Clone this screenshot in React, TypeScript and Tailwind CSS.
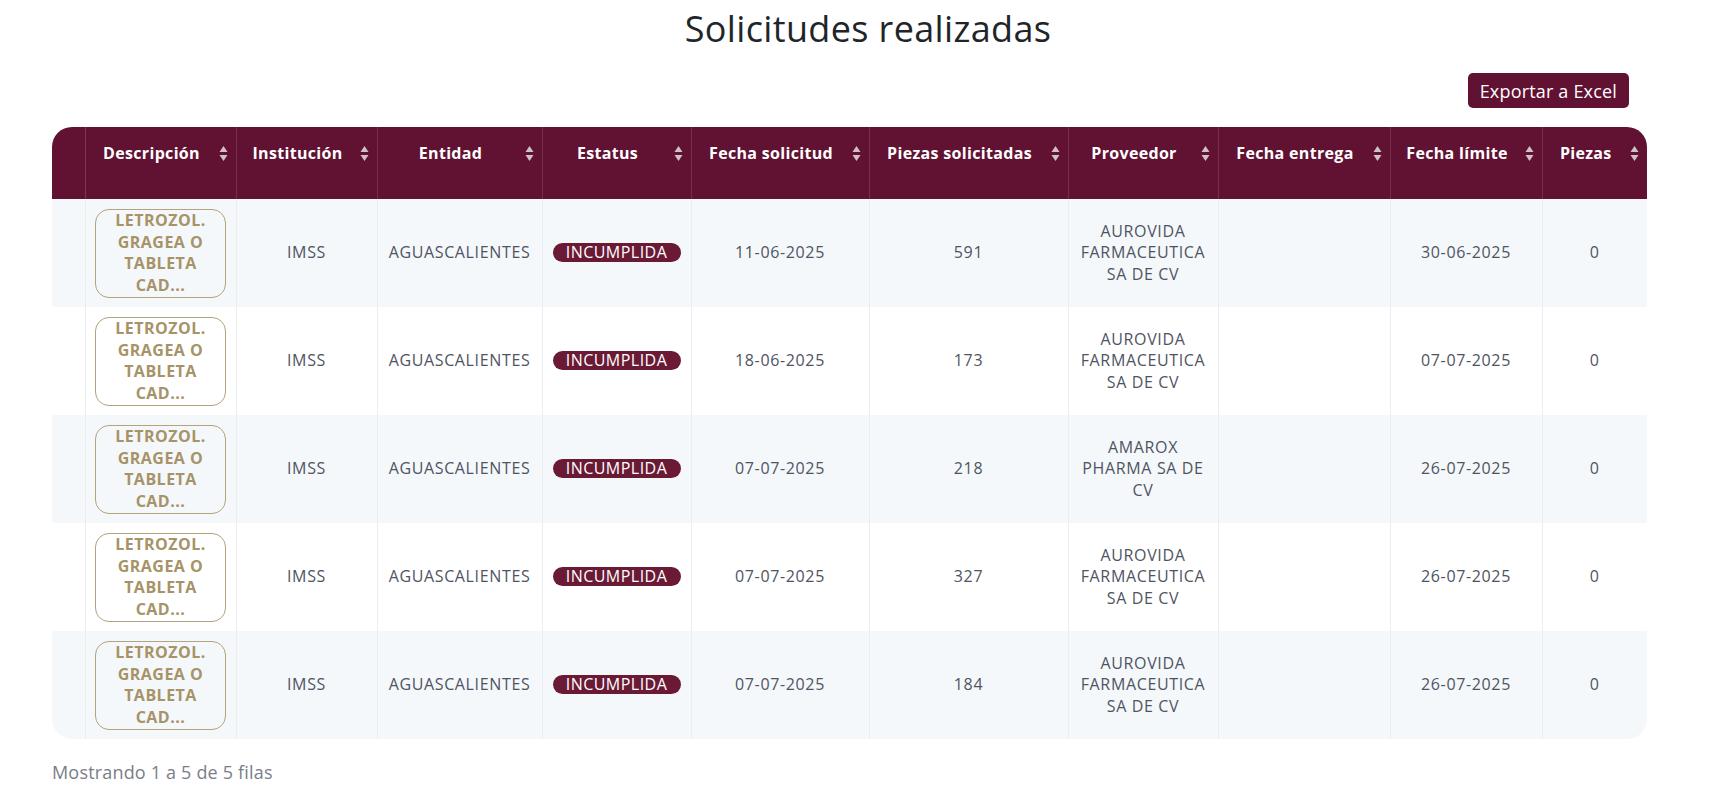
import React from "react";

type Row = {
  fecha: string;
  piezas: string;
  proveedor: string[];
  limite: string;
};

const rows: Row[] = [
  { fecha: "11-06-2025", piezas: "591", proveedor: ["AUROVIDA", "FARMACEUTICA", "SA DE CV"], limite: "30-06-2025" },
  { fecha: "18-06-2025", piezas: "173", proveedor: ["AUROVIDA", "FARMACEUTICA", "SA DE CV"], limite: "07-07-2025" },
  { fecha: "07-07-2025", piezas: "218", proveedor: ["AMAROX", "PHARMA SA DE", "CV"], limite: "26-07-2025" },
  { fecha: "07-07-2025", piezas: "327", proveedor: ["AUROVIDA", "FARMACEUTICA", "SA DE CV"], limite: "26-07-2025" },
  { fecha: "07-07-2025", piezas: "184", proveedor: ["AUROVIDA", "FARMACEUTICA", "SA DE CV"], limite: "26-07-2025" },
];

const columns = [
  "Descripción",
  "Institución",
  "Entidad",
  "Estatus",
  "Fecha solicitud",
  "Piezas solicitadas",
  "Proveedor",
  "Fecha entrega",
  "Fecha límite",
  "Piezas",
];

const widths = [33, 151, 141, 165, 149, 178, 199, 150, 172, 152, 105];

function SortIcon() {
  return (
    <svg width="9" height="17" viewBox="0 0 9 17" className="absolute right-[8px] top-[18px]">
      <path d="M4.5 1 L8.5 7 L0.5 7 Z" fill="#cdc2c7" />
      <path d="M4.5 16 L8.5 10 L0.5 10 Z" fill="#cdc2c7" />
    </svg>
  );
}

export default function App() {
  return (
    <div className="min-h-screen bg-white pl-[52px] pr-[76px] pt-[9px] font-['Open_Sans','Liberation_Sans',sans-serif]">
      <h1 className="pl-[37px] text-center text-[36px] font-normal leading-[40px] tracking-[0.01em] text-[#212529]">
        Solicitudes realizadas
      </h1>

      <div className="mt-[24px] flex justify-end pr-[18px]">
        <button className="h-[35px] rounded-[5px] bg-[#611232] px-[12px] text-[18px] leading-[22px] tracking-[0.01em] text-white">
          Exportar a Excel
        </button>
      </div>

      <div className="mt-[19px] overflow-hidden rounded-[20px]">
        <table className="w-full table-fixed border-collapse">
          <colgroup>
            {widths.map((w, i) => (
              <col key={i} style={{ width: w }} />
            ))}
          </colgroup>
          <thead>
            <tr className="bg-[#611232]">
              <th className="h-[72px] border-r border-[#7a3753]" />
              {columns.map((c, i) => (
                <th
                  key={c}
                  className={`h-[72px] p-0 align-top text-[16px] font-bold leading-[24px] tracking-[0.02em] text-white ${
                    i < columns.length - 1 ? "border-r border-[#74304c]" : ""
                  }`}
                >
                  <div className="relative h-[72px] pl-[12px] pr-[30px] pt-[14px] text-center whitespace-nowrap">
                    {c}
                    <SortIcon />
                  </div>
                </th>
              ))}
            </tr>
          </thead>
          <tbody className="text-[16px] leading-[21.5px] tracking-[0.04em] text-[#4f5462]">
            {rows.map((r, i) => (
              <tr key={i} className={`h-[108px] ${i % 2 === 0 ? "bg-[#f5f8fb]" : "bg-white"}`}>
                <td className="border-r border-[#eaeef3]" />
                <td className="border-r border-[#eaeef3] text-center align-middle">
                  <div className="mx-auto flex h-[89px] w-[131px] flex-col items-center justify-center rounded-[14px] border-[1.5px] border-[#b3a27b] text-[16px] font-bold leading-[21.5px] tracking-[0.03em] text-[#a69367]">
                    <span>LETROZOL.</span>
                    <span>GRAGEA O</span>
                    <span>TABLETA</span>
                    <span>CAD...</span>
                  </div>
                </td>
                <td className="border-r border-[#eaeef3] text-center">IMSS</td>
                <td className="border-r border-[#eaeef3] text-center">AGUASCALIENTES</td>
                <td className="border-r border-[#eaeef3] text-center">
                  <span className="inline-block h-[19px] w-[128px] rounded-full bg-[#6a1a35] text-[16px] leading-[19px] tracking-[0.03em] text-white">
                    INCUMPLIDA
                  </span>
                </td>
                <td className="border-r border-[#eaeef3] text-center">{r.fecha}</td>
                <td className="border-r border-[#eaeef3] text-center">{r.piezas}</td>
                <td className="border-r border-[#eaeef3] text-center">
                  {r.proveedor.map((p) => (
                    <span key={p} className="block">
                      {p}
                    </span>
                  ))}
                </td>
                <td className="border-r border-[#eaeef3]" />
                <td className="border-r border-[#eaeef3] text-center">{r.limite}</td>
                <td className="text-center">0</td>
              </tr>
            ))}
          </tbody>
        </table>
      </div>

      <p className="mt-[21px] text-[18px] leading-[24px] tracking-[0.01em] text-[#7a7e88]">Mostrando 1 a 5 de 5 filas</p>
    </div>
  );
}
